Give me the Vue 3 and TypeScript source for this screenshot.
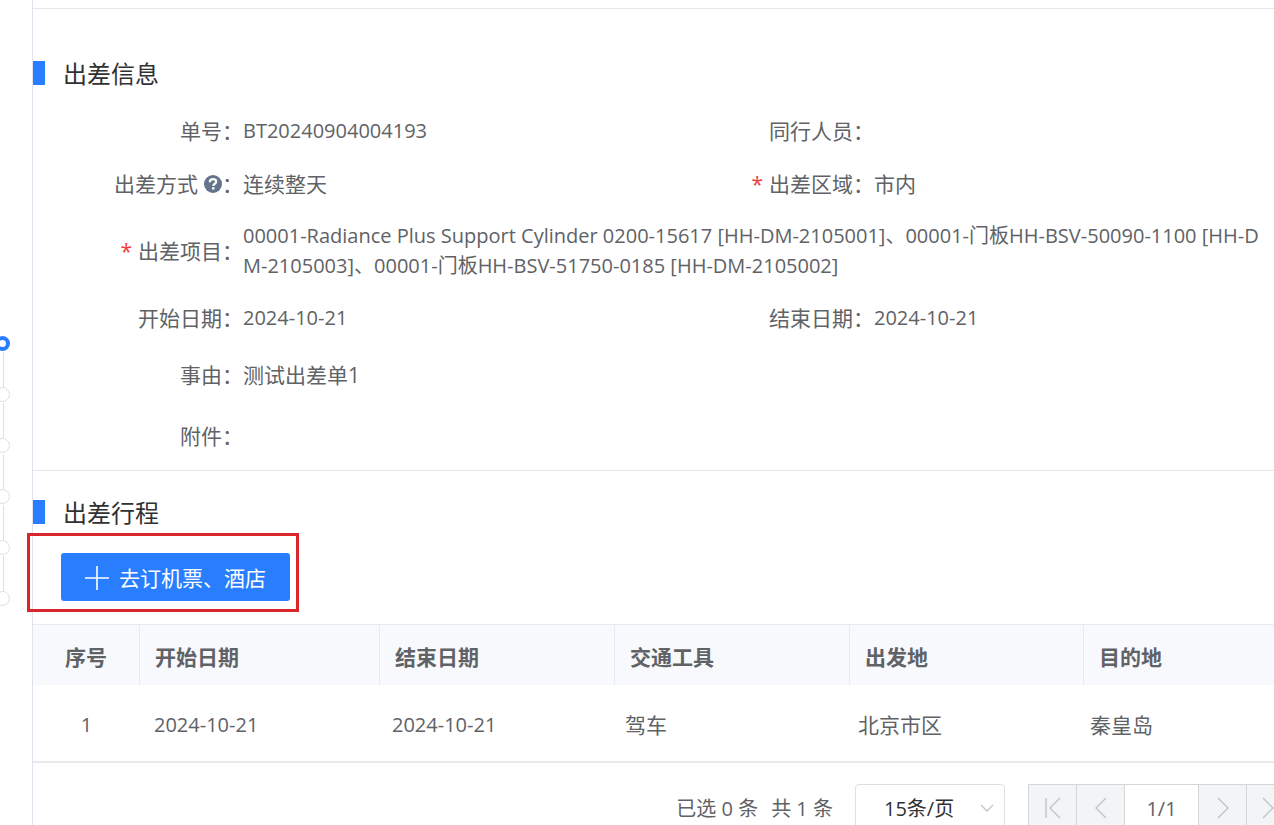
<script setup lang="ts">
import { ref } from 'vue'

interface Field {
  label: string
  value: string
  required?: boolean
  help?: boolean
  kind?: 'wide' | 'tall' | 'code'
}

const fields: Field[] = [
  { label: '单号', value: 'BT20240904004193', kind: 'code' },
  { label: '同行人员', value: '' },
  { label: '出差方式', value: '连续整天', help: true },
  { label: '出差区域', value: '市内', required: true },
  {
    label: '出差项目',
    value:
      '00001-Radiance Plus Support Cylinder 0200-15617 [HH-DM-2105001]、00001-门板HH-BSV-50090-1100 [HH-DM-2105003]、00001-门板HH-BSV-51750-0185 [HH-DM-2105002]',
    required: true,
    kind: 'wide',
  },
  { label: '开始日期', value: '2024-10-21', kind: 'code' },
  { label: '结束日期', value: '2024-10-21', kind: 'code' },
  { label: '事由', value: '测试出差单1', kind: 'tall' },
  { label: '附件', value: '', kind: 'tall' },
]

const columns: string[] = ['序号', '开始日期', '结束日期', '交通工具', '出发地', '目的地']
const rows: string[][] = [['1', '2024-10-21', '2024-10-21', '驾车', '北京市区', '秦皇岛']]
const steps: number[] = [1, 2, 3, 4, 5, 6]
const activeStep = ref(1)
const pageSize = ref('15')
const page = ref('1/1')
</script>

<template>
  <div class="page">
    <ol class="rail" aria-label="步骤">
      <li v-for="s in steps" :key="s" class="step" :class="{ active: s === activeStep }"></li>
    </ol>

    <main class="main">
      <div class="top-strip"></div>

      <section class="info">
        <h2 class="title">出差信息</h2>
        <dl class="fields">
          <div v-for="f in fields" :key="f.label" class="field" :class="f.kind">
            <dt>
              <span v-if="f.required" class="star">*</span>
              <span>{{ f.label }}</span>
              <svg v-if="f.help" class="help" viewBox="0 0 18 18" aria-hidden="true">
                <circle cx="9" cy="9" r="9" fill="#64748b" />
                <path d="M5.8 7.2C5.8 5.2 7.1 4.1 9.1 4.1c1.9 0 3.1 1 3.1 2.6 0 2.1-2.8 2-2.9 4.2" fill="none" stroke="#fff" stroke-width="2.2" />
                <rect x="8.1" y="12.2" width="2.4" height="2.3" fill="#fff" />
              </svg>
              <span>：</span>
            </dt>
            <dd>{{ f.value }}</dd>
          </div>
        </dl>
      </section>

      <section class="trips">
        <h2 class="title">出差行程</h2>
        <div class="booking">
          <button type="button" class="book">
            <svg class="plus" viewBox="0 0 26 26" aria-hidden="true">
              <path d="M13 1v24M1 13h24" fill="none" stroke="#fff" stroke-width="1.6" />
            </svg>
            <span>去订机票、酒店</span>
          </button>
          <div class="frame"></div>
        </div>

        <table class="table">
          <thead>
            <tr>
              <th v-for="c in columns" :key="c" scope="col">{{ c }}</th>
            </tr>
          </thead>
          <tbody>
            <tr v-for="r in rows" :key="r[0]">
              <td v-for="(v, i) in r" :key="i">{{ v }}</td>
            </tr>
          </tbody>
        </table>

        <div class="pager">
          <span class="summary"><span>已选 0 条</span><span>共 1 条</span></span>
          <div class="size">
            <select v-model="pageSize" aria-label="每页条数">
              <option value="15">15条/页</option>
            </select>
            <svg class="caret" viewBox="0 0 14 8" aria-hidden="true">
              <path d="M1 1l6 6 6-6" fill="none" stroke="#c0c4cc" stroke-width="1.3" />
            </svg>
          </div>
          <nav class="nav" aria-label="分页">
            <button type="button" aria-label="首页">
              <svg viewBox="0 0 24 24"><path d="M5 2v20M19 2L9 12l10 10" /></svg>
            </button>
            <button type="button" aria-label="上一页">
              <svg viewBox="0 0 24 24"><path d="M17 2L7 12l10 10" /></svg>
            </button>
            <input v-model="page" aria-label="页码" />
            <button type="button" aria-label="下一页">
              <svg viewBox="0 0 24 24"><path d="M7 2l10 10L7 22" /></svg>
            </button>
            <button type="button" aria-label="末页">
              <svg viewBox="0 0 24 24"><path d="M4 2l10 10L4 22M18 2v20" /></svg>
            </button>
          </nav>
        </div>
      </section>
    </main>
  </div>
</template>

<style>
body {
  margin: 0;
  overflow: hidden;
  background: #fff;
}
</style>

<style scoped>
.page {
  display: flex;
  min-height: 100vh;
  color: #606266;
  font-family: 'Open Sans', 'Noto Sans CJK SC', sans-serif;
  font-size: 21px;
  line-height: 30px;
}

.page * {
  box-sizing: border-box;
}

/* step rail */
.rail {
  flex: none;
  width: 32px;
  margin: 0;
  padding: 336px 0 0;
  list-style: none;
}

.step {
  position: relative;
  width: 15px;
  height: 15px;
  margin: 0 0 36px -5px;
  border: 1px solid #dcdfe6;
  border-radius: 50%;
  background: #fff;
}

.step.active {
  border: 4px solid #297eff;
}

.step:not(:first-child)::before {
  content: '';
  position: absolute;
  left: 7px;
  bottom: 100%;
  width: 1px;
  height: 36px;
  background: #dcdfe6;
}

/* content */
.main {
  flex: 1;
  min-width: 0;
  margin-right: -21px;
  border-left: 1px solid #dfe3ee;
}

.top-strip {
  height: 9px;
  border-bottom: 1px solid #e4e7ed;
}

.title {
  display: flex;
  align-items: flex-start;
  gap: 18px;
  height: 24px;
  margin: 0;
  color: #303133;
  font-size: 24px;
  font-weight: 400;
  line-height: 26px;
}

.title::before {
  content: '';
  width: 12px;
  height: 24px;
  background: #297eff;
}

.info {
  padding: 52px 0 4px;
  border-bottom: 1px solid #e6e6e6;
}

.fields {
  display: grid;
  grid-template-columns: 1fr 1fr;
  margin: 19px 0 0;
}

.field {
  display: grid;
  grid-template-columns: 210px 1fr;
  align-items: center;
  min-height: 53px;
}

.field.wide {
  grid-column: 1 / -1;
  min-height: 81px;
}

.field.tall {
  grid-column: 1 / -1;
  min-height: 61px;
}

.field dt {
  display: flex;
  align-items: center;
  justify-content: flex-end;
}

.field dd {
  margin: 0;
  word-break: break-all;
}

.field.wide dd {
  padding-right: 30px;
  font-size: 20px;
}

.field.code dd {
  font-size: 20px;
}

.star {
  margin-right: 6px;
  color: #f23c3c;
}

.help {
  width: 18px;
  height: 18px;
  margin-left: 6px;
}

.trips {
  padding-top: 29px;
}

.booking {
  position: relative;
  width: max-content;
  margin: 29px 0 23px 28px;
}

.book {
  display: flex;
  align-items: center;
  gap: 9px;
  height: 48px;
  padding: 2px 24px 0 23px;
  border: 0;
  border-radius: 3px;
  background: #297eff;
  color: #fff;
  font: inherit;
}

.plus {
  width: 26px;
  height: 26px;
}

.frame {
  position: absolute;
  inset: -20px -9px -11px -34px;
  border: 3px solid #d9252b;
  pointer-events: none;
}

/* trip table */
.table {
  display: block;
  border-top: 1px solid #e6eaf3;
  border-bottom: 2px solid #e8eaec;
}

.table thead,
.table tbody {
  display: block;
}

.table tr {
  display: grid;
  align-items: center;
}

.table thead tr {
  grid-template-columns: 107px 240fr 235fr 235fr 234fr 211fr;
  background: #f7f9fd;
}

.table tbody tr {
  grid-template-columns: 107px 238fr 233fr 233fr 232fr 219fr;
}

.table th {
  padding: 17px 15px 13px;
  border-right: 1px solid #e6eaf3;
  font-weight: 700;
  text-align: left;
}

.table td {
  padding: 25px 14px 21px;
  font-size: 21px;
}

.table td:nth-child(-n + 3) {
  font-size: 20px;
}

.table th:first-child,
.table td:first-child {
  text-align: center;
}

/* pagination */
.pager {
  display: flex;
  align-items: center;
  justify-content: flex-end;
  margin-top: 21px;
}

.summary {
  display: flex;
  gap: 13px;
  padding-top: 2px;
  margin-right: 22px;
  font-size: 20px;
}

.size {
  position: relative;
  width: 150px;
  margin-right: 23px;
}

.size select {
  width: 100%;
  height: 48px;
  padding: 2px 28px 0;
  border: 1px solid #dcdfe6;
  border-radius: 4px;
  appearance: none;
  background: #fff;
  color: #303133;
  font: inherit;
  font-size: 20px;
}

.caret {
  position: absolute;
  top: 20px;
  right: 11px;
  width: 14px;
  height: 8px;
  pointer-events: none;
}

.nav {
  display: flex;
  border: 1px solid #d4d6da;
}

.nav button {
  display: flex;
  align-items: center;
  justify-content: center;
  width: 48px;
  height: 46px;
  padding: 0;
  border: 0;
  border-right: 1px solid #d4d6da;
  background: #f3f4f6;
}

.nav button:last-child {
  width: 47px;
  border-right: 0;
}

.nav svg {
  width: 24px;
  height: 24px;
  fill: none;
  stroke: #c0c4cc;
  stroke-width: 1.4;
}

.nav input {
  width: 74px;
  height: 46px;
  padding: 0;
  border: 0;
  border-right: 1px solid #d4d6da;
  background: #fff;
  color: #606266;
  font: inherit;
  font-size: 20px;
  text-align: center;
}
</style>
